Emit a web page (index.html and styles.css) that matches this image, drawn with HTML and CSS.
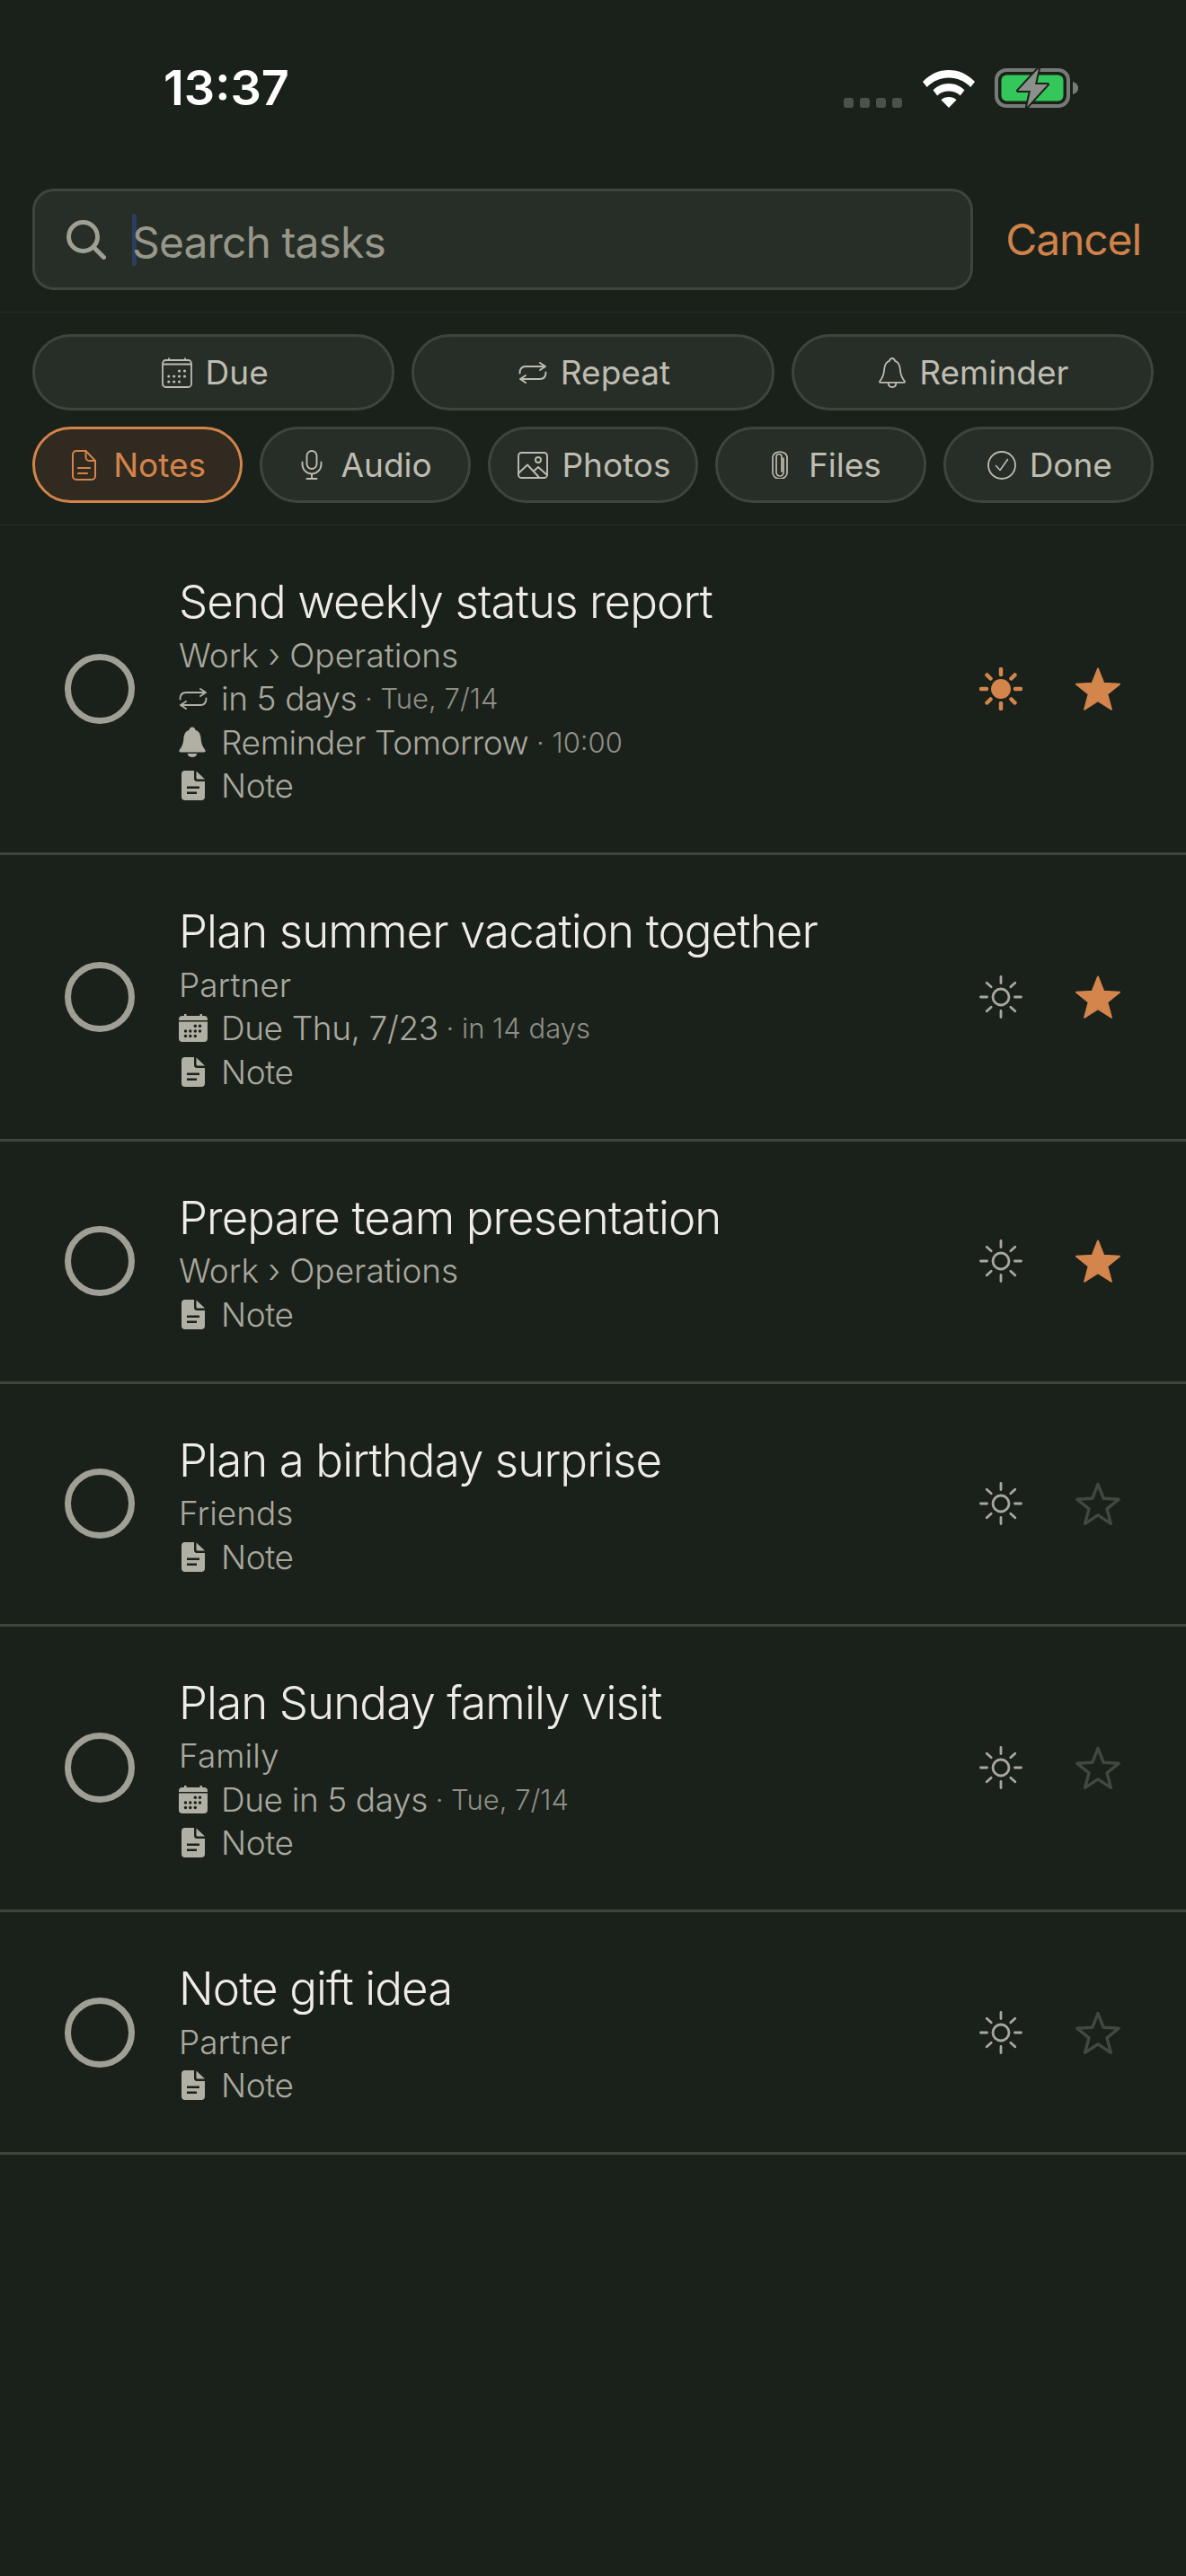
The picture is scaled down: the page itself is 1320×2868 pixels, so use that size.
FILE: index.html
```html
<!DOCTYPE html>
<html lang="en">
<head>
<meta charset="UTF-8">
<title>Search tasks</title>
<link rel="stylesheet" href="styles.css">
</head>
<body>

<svg class="sprite" aria-hidden="true">
    <symbol id="i-search" viewBox="0 0 44 44"><circle cx="18.5" cy="18.5" r="16" fill="none" stroke="currentColor" stroke-width="5"/><path d="M30 30L41.5 41.5" fill="none" stroke="currentColor" stroke-width="5" stroke-linecap="round"/></symbol>
    <symbol id="i-calendar" viewBox="0 0 34 34"><g fill="none" stroke="currentColor" stroke-width="1.8"><rect x="1" y="3" width="32" height="30" rx="3.5"/><path d="M1 7.5h32M8 .5v3M26 .5v3"/></g><g fill="currentColor"><circle cx="19.5" cy="15" r="1.6"/><circle cx="25.5" cy="15" r="1.6"/><circle cx="7.8" cy="21" r="1.6"/><circle cx="13.7" cy="21" r="1.6"/><circle cx="19.5" cy="21" r="1.6"/><circle cx="25.5" cy="21" r="1.6"/><circle cx="7.8" cy="27" r="1.6"/><circle cx="13.7" cy="27" r="1.6"/><circle cx="19.5" cy="27" r="1.6"/></g></symbol>
    <symbol id="i-repeat" viewBox="0 0 32 24"><path d="M1.5 12.5C1.5 7.5 3.5 5 8 5H29.5M24 1l6 4-6 4M30.5 11.5C30.5 16.5 28.5 19 24 19H2.5M8 15l-6 4 6 4" fill="none" stroke="currentColor" stroke-width="2" stroke-linecap="round" stroke-linejoin="round"/></symbol>
    <symbol id="i-bell" viewBox="0 0 30 34"><path d="M15 1c-1.7 0-2.7 1.200-3.100 2.900C7.700 5.300 6.500 9 6.200 13c-.3 4.500-1.200 8.800-5 13.500-.5.700-.1 1.300.7 1.300h26.200c.8 0 1.200-.6.700-1.300-3.800-4.700-4.700-9-5-13.500-.3-4-1.500-7.700-5.700-9.100C17.700 2.200 16.700 1 15 1zM10.500 28c.2 3.500 2 5 4.500 5s4.300-1.500 4.500-5" fill="none" stroke="currentColor" stroke-width="1.800" stroke-linejoin="round"/></symbol>
    <symbol id="i-doc" viewBox="0 0 27 34"><g fill="none" stroke="currentColor" stroke-width="2" stroke-linecap="round" stroke-linejoin="round"><path d="M5 1h10.500L26 12v17a4 4 0 0 1-4 4H5a4 4 0 0 1-4-4V5a4 4 0 0 1 4-4z"/><path d="M15.500 1v7a4 4 0 0 0 4 4H26M7 20h13M7 26h10"/></g></symbol>
    <symbol id="i-mic" viewBox="0 0 24 33"><g fill="none" stroke="currentColor" stroke-width="1.900" stroke-linecap="round"><rect x="6.500" y="1" width="11" height="20" rx="5.500"/><path d="M1.500 13.500v2.500a10.500 10.500 0 0 0 21 0v-2.500M12 26.500V32M6.500 32h11"/></g></symbol>
    <symbol id="i-photo" viewBox="0 0 34 30"><g fill="none" stroke="currentColor" stroke-width="1.900" stroke-linejoin="round"><rect x="1" y="1" width="32" height="28" rx="3.500"/><circle cx="23" cy="9" r="3"/><path d="M1 24l10-9.500L24 28.500M18 21.500l5-4.500 10 9"/></g></symbol>
    <symbol id="i-clip" viewBox="0 0 18 31"><path d="M13 8v16a4 4 0 0 1-8 0V6.500a3 3 0 0 1 6 0V23M17 6v18.500a8 6.500 0 0 1-16 0V7a8 6 0 0 1 16 0" fill="none" stroke="currentColor" stroke-width="1.700" stroke-linecap="round"/></symbol>
    <symbol id="i-check" viewBox="0 0 32 32"><circle cx="16" cy="16" r="15" fill="none" stroke="currentColor" stroke-width="1.800"/><path d="M9.500 16.500l4.500 5 8.500-12" fill="none" stroke="currentColor" stroke-width="1.600" stroke-linecap="round" stroke-linejoin="round"/></symbol>
    <symbol id="f-repeat" viewBox="0 0 32 24"><path d="M1.500 12.500C1.500 7.500 3.500 5 8 5H29.500M24 1l6 4-6 4M30.500 11.500C30.500 16.500 28.500 19 24 19H2.500M8 15l-6 4 6 4" fill="none" stroke="currentColor" stroke-width="1.900" stroke-linecap="round" stroke-linejoin="round"/></symbol>
    <symbol id="f-bell" viewBox="0 0 30 34"><path d="M15 .5c-2 0-3.200 1.300-3.500 3.200C7 5.200 5.700 9.200 5.400 13.200c-.3 4.500-1.200 8.300-4.600 12.500-1 1.300-.4 2.800 1.200 2.800h26c1.600 0 2.200-1.500 1.200-2.800-3.400-4.200-4.300-8-4.600-12.500-.3-4-1.600-8-6.100-9.500C18.200 1.800 17 .5 15 .5zM9.500 30c1 3 3 4 5.500 4s4.500-1 5.500-4z" fill="currentColor"/></symbol>
    <symbol id="f-doc" viewBox="0 0 26 33"><path fill-rule="evenodd" d="M4 0h10v8.500a3.500 3.500 0 0 0 3.500 3.500H26v17a4 4 0 0 1-4 4H4a4 4 0 0 1-4-4V4a4 4 0 0 1 4-4zM6 17.500v2.600h14v-2.600zM6 23.500v2.600h11v-2.600z" fill="currentColor"/><path d="M16.500.5L26 9.500h-8a1.500 1.500 0 0 1-1.500-1.500z" fill="currentColor"/></symbol>
    <symbol id="f-calendar" viewBox="0 0 32 31"><path d="M6 0h2.500v2h15V0H26v2h2a4 4 0 0 1 4 4v1H0V6a4 4 0 0 1 4-4h2zM0 8.500h32V27a4 4 0 0 1-4 4H4a4 4 0 0 1-4-4z" fill="currentColor"/><g fill="#1a211b"><circle cx="18.300" cy="13.300" r="1.700"/><circle cx="23.500" cy="13.300" r="1.700"/><circle cx="7.500" cy="19" r="1.700"/><circle cx="12.800" cy="19" r="1.700"/><circle cx="18.300" cy="19" r="1.700"/><circle cx="23.500" cy="19" r="1.700"/><circle cx="7.500" cy="24.500" r="1.700"/><circle cx="12.800" cy="24.500" r="1.700"/><circle cx="18.300" cy="24.500" r="1.700"/></g></symbol>
    <symbol id="i-sun" viewBox="0 0 48 48"><circle cx="24" cy="24" r="9" fill="none" stroke="currentColor" stroke-width="2.800"/><path d="M24 1.500v7M24 39.500v7M1.500 24h7M39.500 24h7M8.200 8.200l5 4.500M34.800 35.300l5 4.500M8.200 39.800l5-4.500M34.800 12.700l5-4.500" fill="none" stroke="currentColor" stroke-width="2.800" stroke-linecap="round"/></symbol>
    <symbol id="i-sun-on" viewBox="0 0 48 48"><circle cx="24" cy="24" r="11" fill="currentColor"/><path d="M24 2v6M24 40v6M2 24h6M40 24h6M8.500 8.500l4 4M35.500 35.500l4 4M8.500 39.500l4-4M35.500 12.500l4-4" fill="none" stroke="currentColor" stroke-width="4.500" stroke-linecap="round"/></symbol>
    <symbol id="i-star" viewBox="0 0 52 50"><path d="M26 2.500l6.400 16.300 17.600.9-13.700 11 4.600 17-14.900-9.600-14.900 9.600 4.600-17L2 19.700l17.600-.9z" fill="currentColor" stroke="currentColor" stroke-width="2" stroke-linejoin="round"/></symbol>
    <symbol id="i-star-off" viewBox="0 0 52 50"><path d="M26 3.500l6.200 15.800 17 .9-13.200 10.700 4.400 16.400L26 37.900l-14.400 9.400L16 30.900 2.800 20.200l17-.9z" fill="none" stroke="currentColor" stroke-width="3.400" stroke-linejoin="round"/></symbol>
</svg>

<div class="status-bar">
    <span class="time">13:37</span>
    <div class="status-icons">
        <div class="signal"><i></i><i></i><i></i><i></i></div>
        <svg class="wifi" viewBox="0 0 58 42"><path d="M29 0C40 0 50 4.500 58 13l-4.700 6C46.500 12 38 8.500 29 8.500S11.500 12 4.700 19L0 13C8 4.500 18 0 29 0zM29 15c6.800 0 13 2.800 17.500 7.300L41.800 28.500C38.500 25.300 34 23.500 29 23.500s-9.500 1.800-12.800 5l-4.700-6.200C16 17.800 22.200 15 29 15zM29 30c3.300 0 6.300 1.200 8.500 3.200L29 42l-8.500-8.800c2.200-2 5.200-3.200 8.500-3.200z" fill="#fff"/></svg>
        <svg class="battery" viewBox="0 0 94 44"><rect x="2" y="2" width="80" height="40" rx="11" fill="none" stroke="#777b76" stroke-width="4"/><rect x="7.500" y="7.500" width="69" height="29" rx="6" fill="#34c759"/><path d="M87 15c3.500.8 6 3.500 6 7s-2.500 6.200-6 7z" fill="#777b76"/><path d="M49 0L26 25h14l-4 18 23-25H45z" fill="#8c908b" stroke="#1a211b" stroke-width="4" stroke-linejoin="round" paint-order="stroke"/></svg>
    </div>
</div>

<div class="search-row">
    <div class="search-box">
        <svg class="search-icon"><use href="#i-search"/></svg>
        <span class="caret"></span>
        <span class="placeholder">Search tasks</span>
    </div>
    <span class="cancel">Cancel</span>
</div>

<div class="filters">
    <div class="filter-row three">
        <div class="chip"><svg class="ic-cal"><use href="#i-calendar"/></svg>Due</div>
        <div class="chip"><svg class="ic-repeat"><use href="#i-repeat"/></svg>Repeat</div>
        <div class="chip"><svg class="ic-bell"><use href="#i-bell"/></svg>Reminder</div>
    </div>
    <div class="filter-row five">
        <div class="chip active"><svg class="ic-doc"><use href="#i-doc"/></svg>Notes</div>
        <div class="chip"><svg class="ic-mic"><use href="#i-mic"/></svg>Audio</div>
        <div class="chip"><svg class="ic-photo"><use href="#i-photo"/></svg>Photos</div>
        <div class="chip"><svg class="ic-clip"><use href="#i-clip"/></svg>Files</div>
        <div class="chip"><svg class="ic-check"><use href="#i-check"/></svg>Done</div>
    </div>
</div>

<div class="task">
    <span class="circle"></span>
    <div class="task-text">
        <div class="title">Send weekly status report</div>
        <div class="line path">Work › Operations</div>
        <div class="line"><svg class="m-repeat"><use href="#f-repeat"/></svg>in 5 days<small> · Tue, 7/14</small></div>
        <div class="line"><svg class="m-bell"><use href="#f-bell"/></svg>Reminder Tomorrow<small> · 10:00</small></div>
        <div class="line"><svg class="m-doc"><use href="#f-doc"/></svg>Note</div>
    </div>
    <svg class="sun on"><use href="#i-sun-on"/></svg>
    <svg class="star on"><use href="#i-star"/></svg>
</div>

<div class="task">
    <span class="circle"></span>
    <div class="task-text">
        <div class="title">Plan summer vacation together</div>
        <div class="line path">Partner</div>
        <div class="line"><svg class="m-cal"><use href="#f-calendar"/></svg>Due Thu, 7/23<small> · in 14 days</small></div>
        <div class="line"><svg class="m-doc"><use href="#f-doc"/></svg>Note</div>
    </div>
    <svg class="sun"><use href="#i-sun"/></svg>
    <svg class="star on"><use href="#i-star"/></svg>
</div>

<div class="task">
    <span class="circle"></span>
    <div class="task-text">
        <div class="title">Prepare team presentation</div>
        <div class="line path">Work › Operations</div>
        <div class="line"><svg class="m-doc"><use href="#f-doc"/></svg>Note</div>
    </div>
    <svg class="sun"><use href="#i-sun"/></svg>
    <svg class="star on"><use href="#i-star"/></svg>
</div>

<div class="task">
    <span class="circle"></span>
    <div class="task-text">
        <div class="title">Plan a birthday surprise</div>
        <div class="line path">Friends</div>
        <div class="line"><svg class="m-doc"><use href="#f-doc"/></svg>Note</div>
    </div>
    <svg class="sun"><use href="#i-sun"/></svg>
    <svg class="star"><use href="#i-star-off"/></svg>
</div>

<div class="task">
    <span class="circle"></span>
    <div class="task-text">
        <div class="title">Plan Sunday family visit</div>
        <div class="line path">Family</div>
        <div class="line"><svg class="m-cal"><use href="#f-calendar"/></svg>Due in 5 days<small> · Tue, 7/14</small></div>
        <div class="line"><svg class="m-doc"><use href="#f-doc"/></svg>Note</div>
    </div>
    <svg class="sun"><use href="#i-sun"/></svg>
    <svg class="star"><use href="#i-star-off"/></svg>
</div>

<div class="task">
    <span class="circle"></span>
    <div class="task-text">
        <div class="title">Note gift idea</div>
        <div class="line path">Partner</div>
        <div class="line"><svg class="m-doc"><use href="#f-doc"/></svg>Note</div>
    </div>
    <svg class="sun"><use href="#i-sun"/></svg>
    <svg class="star"><use href="#i-star-off"/></svg>
</div>

</body>
</html>
```

FILE: styles.css
```css
* {
    box-sizing: border-box;
}

body {
    margin: 0;
    background-color: #1a211b;
    font-family: Inter, "Liberation Sans", sans-serif;
    color: #a9a89e;
}

.sprite {
    position: absolute;
    width: 0;
    height: 0;
}

svg {
    flex: none;
    display: block;
}

/* status bar */
.status-bar {
    height: 195px;
    padding: 0 119px 0 182px;
    display: flex;
    align-items: center;
    justify-content: space-between;
}

.time {
    font-size: 54px;
    font-weight: 600;
    color: #fff;
}

.status-icons {
    display: flex;
    align-items: flex-end;
}

.signal {
    display: flex;
    gap: 7px;
    margin-right: 23px;
}

.signal i {
    width: 11px;
    height: 11px;
    border-radius: 3px;
    background-color: #4b514b;
}

.wifi {
    width: 58px;
    height: 42px;
    margin-right: 22px;
}

.battery {
    width: 94px;
    height: 44px;
}

/* search */
.search-row {
    margin-top: 15px;
    padding: 0 50px 24px 36px;
    display: flex;
    align-items: center;
    justify-content: space-between;
    border-bottom: 1px solid #262e27;
}

.search-box {
    width: 1047px;
    height: 113px;
    padding-left: 35px;
    display: flex;
    align-items: center;
    background-color: #262e27;
    border: 3px solid #3c473b;
    border-radius: 24px;
}

.search-icon {
    width: 44px;
    height: 44px;
    color: #a09f94;
}

.caret {
    width: 5px;
    height: 58px;
    margin-left: 29px;
    background-color: #2c3c5e;
    border-radius: 2px;
}

.placeholder {
    margin: 6px 0 0 -5px;
    font-size: 48px;
    letter-spacing: -0.9px;
    color: #979689;
}

.cancel {
    font-size: 48px;
    letter-spacing: -1.1px;
    color: #d0824a;
}

/* filter chips */
.filters {
    padding: 24px 36px 24px 36px;
    display: flex;
    flex-direction: column;
    gap: 18px;
    border-bottom: 1px solid #262e27;
}

.filter-row {
    display: grid;
    gap: 19px;
}

.three {
    grid-template-columns: repeat(3, 1fr);
}

.five {
    grid-template-columns: repeat(5, 1fr);
}

.chip {
    height: 85px;
    padding-left: 3px;
    display: flex;
    align-items: center;
    justify-content: center;
    gap: 15px;
    background-color: #262e27;
    border: 3px solid #3c473b;
    border-radius: 43px;
    font-size: 37px;
    color: #bfbcb1;
}

.chip.active {
    background-color: #302a20;
    border-color: #d4844a;
    color: #d4844a;
}

.ic-cal { width: 34px; height: 34px; }
.ic-repeat { width: 32px; height: 24px; }
.ic-bell { width: 30px; height: 34px; }
.ic-doc { width: 27px; height: 34px; margin-right: 4px; }
.ic-mic { width: 24px; height: 33px; margin-right: 5px; }
.ic-photo { width: 34px; height: 30px; }
.ic-clip { width: 18px; height: 31px; margin: 0 8px 0 10px; }
.ic-check { width: 32px; height: 32px; }

/* task rows */
.task {
    padding: 49px 72px;
    display: flex;
    align-items: center;
    border-bottom: 3px solid #3c473b;
}

.circle {
    flex: none;
    width: 78px;
    height: 78px;
    border: 7px solid #a09f95;
    border-radius: 50%;
}

.task-text {
    flex: 1;
    margin-left: 49px;
    padding: 6px 0 1px;
}

.title {
    height: 60px;
    margin-bottom: 5px;
    line-height: 60px;
    font-size: 51px;
    letter-spacing: -0.9px;
    font-weight: 300;
    color: #efece5;
}

.line {
    height: 48.5px;
    display: flex;
    align-items: center;
    font-size: 37px;
    letter-spacing: -0.4px;
    font-weight: 300;
    white-space: pre;
}

.line.path {
    letter-spacing: 0;
}

.line small {
    font-size: 31px;
    letter-spacing: 0;
    color: #8f8e85;
}

.line svg {
    margin-right: 15px;
    color: #b1b0a5;
}

.m-repeat { width: 32px; height: 24px; }
.m-bell { width: 30px; height: 34px; margin-right: 17px !important; }
.m-doc { width: 26px; height: 33px; margin-left: 3px; margin-right: 18px !important; }
.m-cal { width: 32px; height: 31px; }

.sun {
    width: 48px;
    height: 48px;
    color: #a9a89e;
}

.sun.on {
    color: #d4854c;
}

.star {
    width: 52px;
    height: 50px;
    margin-left: 58px;
    color: #3f4a3f;
}

.star.on {
    color: #d4854c;
}
```
